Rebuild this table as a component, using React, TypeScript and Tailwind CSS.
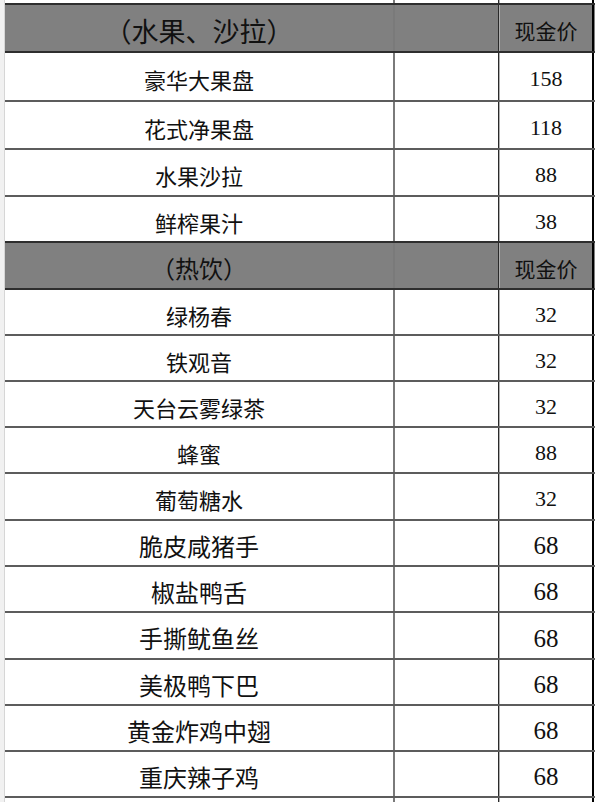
import React from "react";

type Row =
  | { kind: "header"; title: string; size: string; h: number }
  | { kind: "item"; name: string; price: string; h: number; big?: boolean };

const rows: Row[] = [
  { kind: "header", title: "（水果、沙拉）", size: "text-[27px]", h: 48 },
  { kind: "item", name: "豪华大果盘", price: "158", h: 49 },
  { kind: "item", name: "花式净果盘", price: "118", h: 48 },
  { kind: "item", name: "水果沙拉", price: "88", h: 47 },
  { kind: "item", name: "鲜榨果汁", price: "38", h: 46 },
  { kind: "header", title: "（热饮）", size: "text-[24px]", h: 47 },
  { kind: "item", name: "绿杨春", price: "32", h: 46 },
  { kind: "item", name: "铁观音", price: "32", h: 46 },
  { kind: "item", name: "天台云雾绿茶", price: "32", h: 46 },
  { kind: "item", name: "蜂蜜", price: "88", h: 46 },
  { kind: "item", name: "葡萄糖水", price: "32", h: 47 },
  { kind: "item", name: "脆皮咸猪手", price: "68", h: 46, big: true },
  { kind: "item", name: "椒盐鸭舌", price: "68", h: 46, big: true },
  { kind: "item", name: "手撕鱿鱼丝", price: "68", h: 47, big: true },
  { kind: "item", name: "美极鸭下巴", price: "68", h: 46, big: true },
  { kind: "item", name: "黄金炸鸡中翅", price: "68", h: 46, big: true },
  { kind: "item", name: "重庆辣子鸡", price: "68", h: 46, big: true },
];

const cjk = { fontFamily: '"Noto Sans CJK SC", "Noto Sans", sans-serif' };
const num = { fontFamily: '"Liberation Serif", "Noto Sans CJK SC", serif' };

function Cells({
  h,
  bg,
  bottom,
  c1,
  c3,
}: {
  h: number;
  bg: string;
  bottom: string;
  c1?: React.ReactNode;
  c3?: React.ReactNode;
}) {
  return (
    <div className={`flex shrink-0 ${bg} border-b-2 ${bottom}`} style={{ height: h }}>
      <div className="w-[388px] flex items-center justify-center pt-[5px]">{c1}</div>
      <div className="w-[2px] bg-[#7a7a7a]" />
      <div className="w-[103px]" />
      <div className="w-[1px] bg-[#2a2a2a]" />
      <div className="w-[1px] bg-[#b0b0b0]" />
      <div className="w-[92px] flex items-center justify-center pt-[5px]">{c3}</div>
      <div className="w-[2px] bg-[#000000]" />
    </div>
  );
}

export default function App() {
  return (
    <div className="w-[600px] h-[802px] flex bg-white overflow-hidden text-[#111]">
      <div className="w-[5px] h-full bg-[#f1f1f1] border-r border-[#d6d6d6] shrink-0" />
      <div className="flex flex-col w-[590px] shrink-0">
        <Cells h={5} bg="bg-white" bottom="border-[#2e2e2e]" />
        {rows.map((r, i) => {
          const next = rows[i + 1];
          const darkBottom = r.kind === "header" || (next && next.kind === "header");
          const bottom = darkBottom ? "border-[#2e2e2e]" : "border-[#5c5c5c]";
          if (r.kind === "header") {
            return (
              <Cells
                key={i}
                h={r.h}
                bg="bg-[#808080]"
                bottom={bottom}
                c1={
                  <span className={`${r.size} leading-none`} style={cjk}>
                    {r.title}
                  </span>
                }
                c3={
                  <span className="text-[21px] leading-none" style={cjk}>
                    现金价
                  </span>
                }
              />
            );
          }
          return (
            <Cells
              key={i}
              h={r.h}
              bg="bg-white"
              bottom={bottom}
              c1={
                <span
                  className={`${r.big ? "text-[24px]" : "text-[22px]"} leading-none`}
                  style={cjk}
                >
                  {r.name}
                </span>
              }
              c3={
                <span
                  className={`${r.big ? "text-[25px]" : "text-[22px]"} leading-none`}
                  style={num}
                >
                  {r.price}
                </span>
              }
            />
          );
        })}
        <Cells h={10} bg="bg-white" bottom="border-transparent" />
      </div>
      <div className="flex-1 h-full bg-white" />
    </div>
  );
}
